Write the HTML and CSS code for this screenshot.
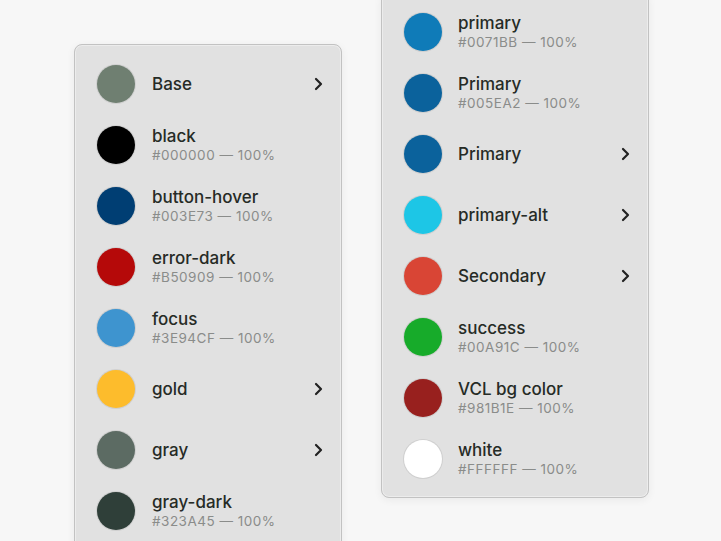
FILE: index.html
```html
<!DOCTYPE html>
<html>
<head>
<meta charset="utf-8">
<link rel="stylesheet" href="styles.css">
</head>
<body>
<div class="stage">
  <div class="panel panel-left">
    <div class="row"><span class="sw" style="background:#6f7f71"></span><div class="txt"><div class="name">Base</div></div><span class="chev"><svg width="10" height="14" viewBox="0 0 10 14"><path d="M2 2l5 5-5 5" fill="none" stroke="#222" stroke-width="2.2" stroke-linecap="round" stroke-linejoin="round"/></svg></span></div>
    <div class="row"><span class="sw" style="background:#000000"></span><div class="txt"><div class="name">black</div><div class="sub">#000000 — 100%</div></div></div>
    <div class="row"><span class="sw" style="background:#003E73"></span><div class="txt"><div class="name">button-hover</div><div class="sub">#003E73 — 100%</div></div></div>
    <div class="row"><span class="sw" style="background:#B50909"></span><div class="txt"><div class="name">error-dark</div><div class="sub">#B50909 — 100%</div></div></div>
    <div class="row"><span class="sw" style="background:#3E94CF"></span><div class="txt"><div class="name">focus</div><div class="sub">#3E94CF — 100%</div></div></div>
    <div class="row"><span class="sw" style="background:#fdbc2c"></span><div class="txt"><div class="name">gold</div></div><span class="chev"><svg width="10" height="14" viewBox="0 0 10 14"><path d="M2 2l5 5-5 5" fill="none" stroke="#222" stroke-width="2.2" stroke-linecap="round" stroke-linejoin="round"/></svg></span></div>
    <div class="row"><span class="sw" style="background:#5c6b63"></span><div class="txt"><div class="name">gray</div></div><span class="chev"><svg width="10" height="14" viewBox="0 0 10 14"><path d="M2 2l5 5-5 5" fill="none" stroke="#222" stroke-width="2.2" stroke-linecap="round" stroke-linejoin="round"/></svg></span></div>
    <div class="row"><span class="sw" style="background:#2f3f39"></span><div class="txt"><div class="name">gray-dark</div><div class="sub">#323A45 — 100%</div></div></div>
  </div>
  <div class="panel panel-right">
    <div class="row"><span class="sw" style="background:#0f7bb8"></span><div class="txt"><div class="name">primary</div><div class="sub">#0071BB — 100%</div></div></div>
    <div class="row"><span class="sw" style="background:#0b629c"></span><div class="txt"><div class="name">Primary</div><div class="sub">#005EA2 — 100%</div></div></div>
    <div class="row"><span class="sw" style="background:#0b629c"></span><div class="txt"><div class="name">Primary</div></div><span class="chev"><svg width="10" height="14" viewBox="0 0 10 14"><path d="M2 2l5 5-5 5" fill="none" stroke="#222" stroke-width="2.2" stroke-linecap="round" stroke-linejoin="round"/></svg></span></div>
    <div class="row"><span class="sw" style="background:#1dc6e6"></span><div class="txt"><div class="name">primary-alt</div></div><span class="chev"><svg width="10" height="14" viewBox="0 0 10 14"><path d="M2 2l5 5-5 5" fill="none" stroke="#222" stroke-width="2.2" stroke-linecap="round" stroke-linejoin="round"/></svg></span></div>
    <div class="row"><span class="sw" style="background:#d94535"></span><div class="txt"><div class="name">Secondary</div></div><span class="chev"><svg width="10" height="14" viewBox="0 0 10 14"><path d="M2 2l5 5-5 5" fill="none" stroke="#222" stroke-width="2.2" stroke-linecap="round" stroke-linejoin="round"/></svg></span></div>
    <div class="row"><span class="sw" style="background:#17ab2a"></span><div class="txt"><div class="name">success</div><div class="sub">#00A91C — 100%</div></div></div>
    <div class="row"><span class="sw" style="background:#98201e"></span><div class="txt"><div class="name">VCL bg color</div><div class="sub">#981B1E — 100%</div></div></div>
    <div class="row"><span class="sw" style="background:#ffffff"></span><div class="txt"><div class="name">white</div><div class="sub">#FFFFFF — 100%</div></div></div>
  </div>
</div>
</body>
</html>
```
FILE: styles.css
```css
html, body {
  margin: 0;
  padding: 0;
  background: #f7f7f7;
  overflow: hidden;
}
body {
  width: 721px;
  height: 541px;
  font-family: Inter, "Liberation Sans", sans-serif;
}
.stage {
  display: flex;
  align-items: flex-start;
  gap: 39px;
  padding-left: 74px;
}
.panel {
  box-sizing: border-box;
  width: 268px;
  background: #e1e1e1;
  border: 1px solid #c2c2c2;
  border-radius: 8px;
  box-shadow: inset 0 0 0 1px #ececec, 0 2px 8px rgba(0,0,0,0.06);
  padding: 8px 0 8px;
}
.panel-left {
  margin-top: 44px;
}
.panel-right {
  margin-top: -8px;
}
.row {
  height: 61px;
  display: flex;
  align-items: center;
  padding: 0 14px 0 22px;
}
.sw {
  flex: 0 0 auto;
  width: 38px;
  height: 38px;
  border-radius: 50%;
  box-shadow: 0 0 0 1px rgba(0,0,0,0.08);
}
.txt {
  flex: 1;
  margin-left: 17px;
  display: flex;
  flex-direction: column;
}
.panel-right .txt {
  margin-left: 16px;
}
.name {
  font-size: 17px;
  font-weight: 500;
  color: #262b26;
  line-height: 20px;
}
.sub {
  font-size: 13.5px;
  letter-spacing: 0.5px;
  color: #8a8c8a;
  line-height: 17px;
  margin-top: 1px;
}
.chev {
  flex: 0 0 auto;
  display: flex;
  align-items: center;
  margin-right: 3px;
}
```
